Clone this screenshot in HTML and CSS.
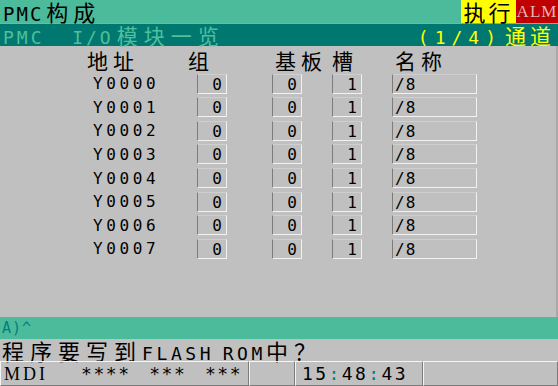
FILE: index.html
```html
<!DOCTYPE html>
<html lang="zh">
	<head>
		<meta charset="UTF-8">
		<title>PMC构成</title>
		<link rel="stylesheet" href="styles.css">
	</head>
	<body>
		<div class="screen">
			<header class="title-bar">
				<h1 class="title">PMC<span class="cjk">构成</span></h1>
				<span class="mode cjk">执行</span>
				<span class="alm">ALM</span>
			</header>
			<div class="sub-bar">
				<span class="sub-title">PMC  I/O<span class="cjk">模块一览</span></span>
				<span class="page">(1/4)<span class="cjk">通道</span></span>
			</div>
			<main class="content">
				<div class="io-table">
					<div class="head head-addr">地址</div>
					<div class="head head-group">组</div>
					<div class="head head-base">基板</div>
					<div class="head head-slot">槽</div>
					<div class="head head-name">名称</div>

					<div class="addr">Y0000</div><div class="cell"><span class="box">0</span></div><div class="cell"><span class="box">0</span></div><div class="cell"><span class="box">1</span></div><div class="cell"><span class="box box-name">/8</span></div>
					<div class="addr">Y0001</div><div class="cell"><span class="box">0</span></div><div class="cell"><span class="box">0</span></div><div class="cell"><span class="box">1</span></div><div class="cell"><span class="box box-name">/8</span></div>
					<div class="addr">Y0002</div><div class="cell"><span class="box">0</span></div><div class="cell"><span class="box">0</span></div><div class="cell"><span class="box">1</span></div><div class="cell"><span class="box box-name">/8</span></div>
					<div class="addr">Y0003</div><div class="cell"><span class="box">0</span></div><div class="cell"><span class="box">0</span></div><div class="cell"><span class="box">1</span></div><div class="cell"><span class="box box-name">/8</span></div>
					<div class="addr">Y0004</div><div class="cell"><span class="box">0</span></div><div class="cell"><span class="box">0</span></div><div class="cell"><span class="box">1</span></div><div class="cell"><span class="box box-name">/8</span></div>
					<div class="addr">Y0005</div><div class="cell"><span class="box">0</span></div><div class="cell"><span class="box">0</span></div><div class="cell"><span class="box">1</span></div><div class="cell"><span class="box box-name">/8</span></div>
					<div class="addr">Y0006</div><div class="cell"><span class="box">0</span></div><div class="cell"><span class="box">0</span></div><div class="cell"><span class="box">1</span></div><div class="cell"><span class="box box-name">/8</span></div>
					<div class="addr">Y0007</div><div class="cell"><span class="box">0</span></div><div class="cell"><span class="box">0</span></div><div class="cell"><span class="box">1</span></div><div class="cell"><span class="box box-name">/8</span></div>
				</div>
			</main>
			<div class="input-bar">A)^</div>
			<div class="message"><span class="cjk">程序要写到</span>FLASH ROM<span class="cjk">中？</span></div>
			<footer class="status">
				<span class="slot slot-mode">MDI<span class="stars">**** *** ***</span></span>
				<span class="slot slot-blank"></span>
				<span class="slot slot-time">15<i>:</i>48<i>:</i>43</span>
				<span class="slot slot-rest"></span>
			</footer>
		</div>
	</body>
</html>
```
FILE: styles.css
```css
html, body {
	margin: 0;
	padding: 0;
	background: #c0c0c0;
}
.screen {
	width: 558px;
	height: 386px;
	display: flex;
	flex-direction: column;
	overflow: hidden;
	font-family: 'DejaVu Sans Mono', 'Noto Sans CJK SC', monospace;
	color: #000;
}
.cjk {
	font-family: 'Noto Sans CJK SC', sans-serif;
}

/* top bars */
.title-bar {
	height: 23px;
	display: flex;
	align-items: stretch;
	background: #4bbb9b;
	border-bottom: 1px solid #8aa;
}
.title {
	flex: 1;
	margin: 0;
	padding-left: 3px;
	font-size: 19px;
	font-weight: normal;
	line-height: 23px;
	letter-spacing: 2px;
}
.title .cjk {
	margin-left: 3px;
	font-size: 22px;
	letter-spacing: 5px;
}
.mode {
	width: 55px;
	background: #ffff00;
	font-size: 22px;
	line-height: 23px;
	letter-spacing: 3px;
	text-align: center;
}
.alm {
	width: 42px;
	background: #c00000;
	color: #e2b4b4;
	font-family: 'Liberation Serif', serif;
	font-size: 17px;
	line-height: 23px;
	letter-spacing: 1px;
	text-align: center;
}
.sub-bar {
	height: 22px;
	display: flex;
	justify-content: space-between;
	align-items: center;
	padding: 0 3px;
	background: #00786f;
	font-size: 18px;
	letter-spacing: 3px;
}
.sub-title {
	color: #4fbf9f;
	white-space: pre;
}
.sub-title .cjk,
.page .cjk {
	margin-left: 3px;
	font-size: 21px;
	letter-spacing: 6px;
}
.page {
	color: #ffff00;
	letter-spacing: 6px;
}
.page .cjk {
	letter-spacing: 4px;
}

/* module list */
.content {
	flex: 1;
	border-right: 2px solid #a8a8a8;
	padding: 1px 0 0 93px;
}
.io-table {
	display: grid;
	grid-template-columns: 104px 75px 60px 60px 85px;
	grid-template-rows: 25px;
	grid-auto-rows: 23.57px;
	align-items: center;
}
.head {
	font-family: 'Noto Sans CJK SC', sans-serif;
	font-size: 21px;
	line-height: 22px;
	letter-spacing: 5px;
	white-space: nowrap;
}
.head-addr { margin-left: -6px; }
.head-group { margin-left: -9px; }
.head-base { margin-left: 3px; }
.head-name { margin-left: 3px; }
.addr {
	font-size: 16px;
	letter-spacing: 3.6px;
}
.box {
	display: block;
	width: 30px;
	height: 20px;
	box-sizing: border-box;
	padding-right: 4px;
	border: 1px solid #f2f2f2;
	border-top-color: #cfcfcf;
	border-left-color: #7c7c7c;
	font-size: 16px;
	line-height: 19px;
	text-align: right;
}
.box-name {
	width: 85px;
	padding: 0 0 0 2px;
	text-align: left;
	letter-spacing: 1px;
}

/* bottom area */
.input-bar {
	height: 22px;
	padding-left: 2px;
	background: #4bbb9b;
	color: #00807a;
	font-size: 15px;
	line-height: 22px;
	letter-spacing: 1px;
}
.message {
	height: 22px;
	padding-left: 2px;
	font-size: 18px;
	line-height: 22px;
	letter-spacing: 3.6px;
	word-spacing: -6px;
	white-space: pre;
}
.message .cjk {
	font-size: 22px;
	letter-spacing: 6px;
}
.status {
	height: 25px;
	display: flex;
	font-size: 17px;
	line-height: 23px;
}
.slot {
	box-sizing: border-box;
	border: 1px solid #f4f4f4;
	border-right-color: #7c7c7c;
	border-bottom-color: #7c7c7c;
	white-space: pre;
}
.slot-mode {
	width: 249px;
	padding-left: 3px;
	font-family: 'Liberation Serif', serif;
	font-size: 18px;
	letter-spacing: 3px;
}
.stars {
	margin-left: 33px;
	font-family: 'DejaVu Sans Mono', monospace;
	font-size: 18px;
	letter-spacing: 1.6px;
	word-spacing: 6px;
}
.slot-blank {
	width: 46px;
}
.slot-time {
	width: 128px;
	padding-left: 6px;
	font-size: 18px;
	letter-spacing: 2.4px;
}
.slot-time i {
	font-style: normal;
	color: #008080;
}
.slot-rest {
	flex: 1;
}
```
